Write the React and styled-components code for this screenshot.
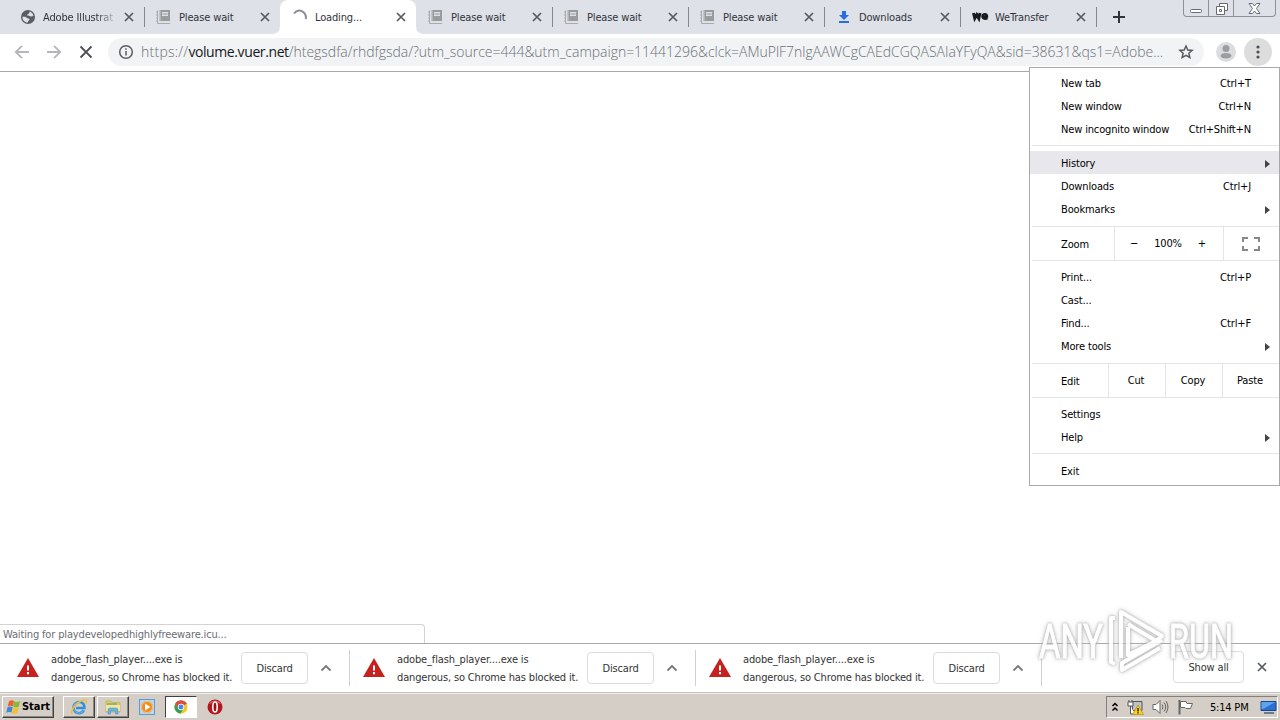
import React from 'react'
import styled, { createGlobalStyle } from 'styled-components'

const GlobalStyle = createGlobalStyle`
    * { box-sizing: border-box; }
    body { margin: 0; background: #fff; overflow: hidden; font: 11px/14px 'DejaVu Sans Condensed', 'DejaVu Sans', sans-serif; letter-spacing: -0.15px; }
    svg { display: block; flex-shrink: 0; }
`

const Screen = styled.div`
    position: relative;
    width: 1280px;
    height: 720px;
    display: flex;
    flex-direction: column;
    overflow: hidden;
    color: #333;
`

const TabStrip = styled.div`
    height: 34px;
    background: #dee1e8;
    display: flex;
    flex-shrink: 0;
    padding-left: 8px;
`

const Tab = styled.div`
    position: relative;
    width: 136px;
    height: 34px;
    padding: 0 10px 0 12px;
    display: flex;
    align-items: center;
    flex-shrink: 0;
    background: ${p => p.$active ? '#fff' : 'transparent'};
    border-radius: 8px 8px 0 0;
    color: #30343a;
`

const TabIcon = styled.span`
    width: 16px;
    height: 16px;
    display: flex;
    margin-right: 7px;
    flex-shrink: 0;
`

const TabTitle = styled.span`
    width: 78px;
    padding-top: 1px;
    white-space: nowrap;
    mask-image: ${p => p.$fade ? 'linear-gradient(90deg, #000 68%, transparent 97%)' : 'none'};
`

const TabClose = styled.span`
    display: flex;
    margin-left: auto;
`

const Divider = styled.i`
    width: 1px;
    height: 20px;
    background: #84878d;
    position: absolute;
    right: -1px;
    top: 7px;
`

const Curve = styled.svg`
    position: absolute;
    bottom: 0;
    left: ${p => p.$right ? 'auto' : '-8px'};
    right: ${p => p.$right ? '-8px' : 'auto'};
    transform: ${p => p.$right ? 'scaleX(-1)' : 'none'};
`

const NewTab = styled.span`
    display: flex;
    align-items: center;
    margin-left: 17px;
`

const WindowButtons = styled.div`
    display: flex;
    height: 17px;
    margin: 0 4px 0 auto;
    border: 1px solid #8e9199;
    border-top: 0;
    border-radius: 0 0 4px 4px;
`

const WindowButton = styled.span`
    width: ${p => p.$w}px;
    height: 16px;
    display: flex;
    align-items: center;
    justify-content: center;
    border-left: ${p => p.$line ? '1px solid #8e9199' : '0'};
`

const Toolbar = styled.div`
    height: 38px;
    border-bottom: 1px solid #a9a9a9;
    display: flex;
    align-items: center;
    padding: 0 8px 1px 14px;
    flex-shrink: 0;
`

const Nav = styled.div`
    display: flex;
    gap: 16px;
    width: 94px;
`

const Address = styled.div`
    width: 1096px;
    height: 28px;
    border-radius: 14px;
    background: #f1f3f4;
    display: flex;
    align-items: center;
    padding: 0 10px;
`

const Url = styled.span`
    width: 1037px;
    margin-left: 7px;
    color: #6b7076;
    font: 300 14px/20px 'Open Sans', 'Noto Sans', sans-serif;
    letter-spacing: -0.015px;
    white-space: nowrap;

    b { font-weight: 400; color: #16181b; letter-spacing: -0.4px; }
`

const Scheme = styled.span`
    letter-spacing: 0.25px;
`

const Round = styled.span`
    width: 28px;
    height: 28px;
    border-radius: 50%;
    background: ${p => p.$on ? '#dddddd' : 'transparent'};
    display: flex;
    align-items: center;
    justify-content: center;
    margin-left: ${p => p.$on ? 4 : 8}px;
`

const Page = styled.div`
    flex: 1;
    display: flex;
    align-items: flex-end;
`

const Status = styled.div`
    width: 425px;
    height: 19px;
    border: 1px solid #d3d3d3;
    border-left: 0;
    border-bottom: 0;
    border-radius: 0 4px 0 0;
    padding: 3px 0 0 3px;
    color: #6b6e73;
`

const Label = styled.span`
    white-space: nowrap;
`

const Menu = styled.div`
    position: absolute;
    left: 1029px;
    top: 67px;
    width: 251px;
    height: 419px;
    background: #fff;
    border: 1px solid #a9a9a9;
    padding-top: 3px;
    color: #000;
`

const MenuRow = styled.div`
    height: 23px;
    display: flex;
    align-items: center;
    justify-content: space-between;
    padding: 2px ${p => p.$sub ? 9 : 28}px 0 31px;
    background: ${p => p.$hover ? '#e8e8ec' : 'transparent'};
`

const MenuLine = styled.div`
    height: 1px;
    margin: ${p => p.$top ?? 5}px 0 ${p => p.$bottom ?? 5}px 2px;
    background: #e4e5e7;
`

const SplitRow = styled.div`
    height: 33px;
    display: flex;
    align-items: center;
    padding-left: 31px;
`

const Cell = styled.span`
    width: ${p => p.$w}px;
    height: 33px;
    border-left: ${p => p.$first ? '0' : '1px solid #e4e5e7'};
    display: flex;
    align-items: center;
    justify-content: ${p => p.$first ? 'flex-start' : 'center'};
    gap: 16px;
    padding: ${p => p.$first ? '2px 0 0' : '0 2px 0 0'};
`

const Shelf = styled.div`
    height: 50px;
    border-top: 1px solid #a9a9a9;
    border-bottom: 1px solid #c4c1bd;
    display: flex;
    flex-shrink: 0;
    background: #fff;
`

const Download = styled.div`
    width: 346px;
    height: 48px;
    display: flex;
    align-items: center;
    padding-left: 16px;
    position: relative;
`

const DownloadLine = styled.i`
    position: absolute;
    right: -4px;
    top: 6px;
    width: 1px;
    height: 36px;
    background: #cfd0d2;
`

const Message = styled.div`
    width: 201px;
    padding: 1px 0 0 11px;
    line-height: 18px;
    display: flex;
    flex-direction: column;
`

const Button = styled.span`
    width: ${p => p.$w}px;
    height: 32px;
    border: 1px solid #dadce0;
    border-radius: 4px;
    display: flex;
    align-items: center;
    justify-content: center;
    padding-top: 1px;
`

const Arrow = styled.span`
    display: flex;
    margin-left: 12px;
`

const ShelfEnd = styled.div`
    display: flex;
    align-items: center;
    margin-left: auto;
    gap: 13px;
    padding: 0 13px 2px 0;
`

const Taskbar = styled.div`
    height: 27px;
    background: #d5cec6;
    border-top: 1px solid #f2efec;
    display: flex;
    padding: 2px 0 0 2px;
    flex-shrink: 0;
`

const TaskButton = styled.span`
    width: ${p => p.$w}px;
    height: 22px;
    display: flex;
    align-items: center;
    justify-content: center;
    margin-left: ${p => p.$ml || 0}px;
    background: ${p => p.$pressed ? '#fff' : 'transparent'};
    border: ${p => p.$flat ? '0' : '1px solid'};
    border-color: ${p => p.$pressed ? '#404040 #fff #fff #404040' : '#fff #404040 #404040 #fff'};
    box-shadow: ${p => p.$flat || p.$pressed ? 'none' : 'inset -1px -1px #8c8780'};
    color: #000;
    font-weight: bold;
    letter-spacing: 0;
`

const Tray = styled.div`
    width: 172px;
    height: 22px;
    margin: 0 2px 0 auto;
    border: 1px solid;
    border-color: #808080 #fff #fff #808080;
    display: flex;
    align-items: center;
    gap: 8px;
    color: #000;
    padding-left: 4px;
`

const Clock = styled.span`
    width: 42px;
    margin: 0 0 0 8px;
    padding-top: 1px;
    white-space: nowrap;
    letter-spacing: -0.2px;
`

const Watermark = styled.svg`
    position: absolute;
    left: 1030px;
    top: 600px;
    filter: drop-shadow(0 0 1px #aaa) drop-shadow(0 0 2px #bbb);
    opacity: 0.85;
    pointer-events: none;
`

const Cross = ({ size = 10, color = '#555a60', w = 1.7 }) => (
    <svg width={size} height={size} viewBox="0 0 10 10" stroke={color} strokeWidth={w}><path d="M1 1l8 8M9 1L1 9" /></svg>
)

const Globe = () => (
    <svg width="16" height="16" viewBox="0 0 16 16">
        <circle cx="8" cy="8" r="7" fill="#5a5d62" />
        <path d="M2.500 7.500c2 .3 3.500.2 4.300 1.300.8 1 2.700.2 2.800 1.700-.8 1-1.600 1.500-1.800 3C4.500 13.500 2.200 11 2.500 7.500zM9.500 2.600c2 .6 3.300 1.900 3.900 3.900-1 .9-1.800 1.300-2.900.8C9.300 6.800 8.600 6.600 7.300 6.500c-.6-.9.500-1.300 1.400-1.700.9-.4.8-1.200.8-2.200z" fill="#dee1e8" />
    </svg>
)

const Book = () => (
    <svg width="16" height="16" viewBox="0 0 16 16" fill="none">
        <path d="M3.500 1H14v11H3.500z" fill="#999b9f" />
        <path d="M0 3h2M0 6h2M0 9h2M0 12h2M1.500 1.500v13H14" stroke="#a7a9ae" />
        <path d="M6 3h6v4H6z" fill="#dcdee4" />
        <path d="M4 1.500v11" stroke="#c8cacf" />
        <path d="M6.500 5h5" stroke="#999b9f" />
    </svg>
)

const Spinner = () => (
    <svg width="16" height="16" viewBox="0 0 16 16" fill="none" stroke="#8a8c91" strokeWidth="2"><path d="M2 4.500C5 .5 9 1 11.500 3.200 13.500 5 14.300 7.500 13.800 10" /></svg>
)

const DownloadIcon = () => (
    <svg width="16" height="16" viewBox="0 0 16 16" fill="#2a6de0"><path d="M6 2h4v4h3l-5 5-5-5h3zM3 12h10v2H3z" /></svg>
)

const WeIcon = () => (
    <svg width="17" height="16" viewBox="0 0 17 16" fill="none" stroke="#17191c" strokeWidth="3">
        <path d="M1.500 4l1.300 5.300 2-3.500 2 3.500L8 4" />
        <path d="M10.500 7.600h4.500c0-3.200-4.500-3.200-4.500-.3 0 2.800 3 2.800 5 1.800" strokeWidth="2.400" />
    </svg>
)

const Back = ({ flip }) => (
    <svg width="16" height="16" viewBox="0 0 16 16" fill="none" stroke="#b4b6b9" strokeWidth="1.800">
        <path d={flip ? 'M1 8h13M8 1.800L14.200 8 8 14.200' : 'M15 8H2M8 1.800L1.800 8 8 14.200'} />
    </svg>
)

const Info = () => (
    <svg width="16" height="16" viewBox="0 0 16 16" fill="none" stroke="#5a5e63" strokeWidth="1.500">
        <circle cx="8" cy="8" r="6.300" /><path d="M8 7v4.500M8 4.200v1.500" />
    </svg>
)

const Star = () => (
    <svg width="16" height="16" viewBox="0 0 24 24" fill="none" stroke="#55595e" strokeWidth="2.200">
        <path d="M12 3l2.700 6 6.500.6-4.900 4.300 1.500 6.400L12 16.900l-5.800 3.400 1.500-6.400-4.900-4.300 6.500-.6z" />
    </svg>
)

const Avatar = () => (
    <svg width="20" height="20" viewBox="0 0 20 20" fill="#9b9da1">
        <circle cx="10" cy="10" r="10" fill="#dcdde0" /><circle cx="10" cy="6.500" r="3.500" /><ellipse cx="10" cy="13.800" rx="5.500" ry="2.800" />
    </svg>
)

const Dots = () => (
    <svg width="4" height="14" viewBox="0 0 4 14" fill="#4d5156"><circle cx="2" cy="2" r="1.600" /><circle cx="2" cy="7" r="1.600" /><circle cx="2" cy="12" r="1.600" /></svg>
)

const Warning = () => (
    <svg width="24" height="24" viewBox="0 0 24 24"><path d="M1 21L12 2l11 19z" fill="#c5221f" /><path d="M12 9.500v5M12 16v2.200" stroke="#fff" strokeWidth="2" /></svg>
)

const SubArrow = () => <svg width="5" height="8"><path d="M0 0l5 4-5 4z" fill="#444" /></svg>

const WindowsFlag = () => (
    <svg width="16" height="16" viewBox="0 0 16 16">
        <path d="M3 2.500q2.500-2 5-.5L7 7.300Q4.500 6 1.700 7.500z" fill="#e8622a" />
        <path d="M8.300 2.300q2.500 1.300 6-.3l-1.500 5.700q-2.500 1.300-5.500 0z" fill="#86b83b" />
        <path d="M1.500 8.300q2.500-1.500 5.200-.2L5.500 13.600q-2.500-1.300-5.200.2z" fill="#3c8ad6" />
        <path d="M7.200 8.500q2.700 1.200 5.500-.2l-1.400 5.700q-2.600 1.500-5.400.2z" fill="#f6c02d" />
    </svg>
)

const Explorer = () => (
    <svg width="18" height="18" viewBox="0 0 18 18" fill="none">
        <path d="M13.800 12.200c-1 2-2.700 3-4.700 3-3.300 0-5.600-2.400-5.600-5.600S5.900 4 9.200 4s5.400 2.500 5.200 6H6" stroke="#2f8fdc" strokeWidth="2.600" />
        <path d="M13.800 12.200c-1 2-2.700 3-4.700 3-3.300 0-5.600-2.400-5.600-5.600S5.900 4 9.200 4" stroke="#7cc4f3" strokeWidth="0.800" />
        <path d="M2 16c-2-3 3-10 9-13 3-1.600 5-1.700 5.500-.3.300.8 0 2-.6 3" stroke="#f0bd34" strokeWidth="1.400" />
    </svg>
)

const Folder = () => (
    <svg width="18" height="18" viewBox="0 0 18 18">
        <path d="M2 3h5l1 1.500h8V14H2z" fill="#e9c667" stroke="#c9a13e" strokeWidth="0.600" />
        <path d="M3 5h10v2H3z" fill="#7fc071" /><path d="M2 7h14v6H2z" fill="#f8e6a0" />
        <path d="M4 16v-4q0-2 2-2h6q2 0 2 2v4h-2.500v-3h-5v3z" fill="#68b5e3" stroke="#3f8cc4" strokeWidth="0.500" />
    </svg>
)

const MediaPlayer = () => (
    <svg width="16" height="16" viewBox="0 0 16 16">
        <rect x="0.500" y="0.500" width="15" height="15" fill="#b4d7f2" stroke="#5d9bd0" />
        <circle cx="8" cy="8" r="6" fill="#f28a1c" /><circle cx="8" cy="8" r="5.500" fill="none" stroke="#fbc577" />
        <path d="M6 4.500L11.500 8 6 11.500z" fill="#fff" />
    </svg>
)

const Chrome = () => (
    <svg width="14" height="14" viewBox="0 0 16 16">
        <circle cx="8" cy="8" r="7.500" fill="#f6c927" />
        <path d="M8 8L1.500 4.250A7.500 7.500 0 0114.500 4.250z" fill="#dd4b3c" />
        <path d="M8 4.500h6.600a7.500 7.500 0 00-13.100-.3L5 10z" fill="#dd4b3c" />
        <path d="M1.500 4.250a7.500 7.500 0 006 11.250L11 10l-6 0z" fill="#2ea05a" />
        <circle cx="8" cy="8" r="3.600" fill="#fff" /><circle cx="8" cy="8" r="2.800" fill="#4585ee" />
    </svg>
)

const Opera = () => (
    <svg width="16" height="16" viewBox="0 0 16 16">
        <circle cx="8" cy="8" r="7.500" fill="#b5161c" /><path d="M2 5a7 7 0 0112 0q-6-2-12 0z" fill="#d9575a" />
        <ellipse cx="8" cy="8" rx="2.200" ry="5" fill="#991015" stroke="#fff" strokeWidth="1.600" />
    </svg>
)

const TrayIcons = () => (
    <>
        <svg width="8" height="10" viewBox="0 0 8 10" fill="none" stroke="#000" strokeWidth="1.500"><path d="M1.500 4L4 1.500 6.500 4M1.500 8.500L4 6l2.500 2.500" /></svg>
        <svg width="17" height="16" viewBox="0 0 17 16" fill="none">
            <path d="M5.500 2.500H15v9H5.500z" fill="#bfc2c4" stroke="#555" />
            <path d="M1 3h5v4H1zM2 1v2M5 1v2M3.500 7v8H8" fill="#fff" stroke="#555" />
            <path d="M11 6l5.500 9.500h-11z" fill="#fbd21e" stroke="#a98400" strokeWidth="0.600" /><path d="M11 9v3.500M11 13.300v1.200" stroke="#000" strokeWidth="1.200" />
        </svg>
        <svg width="17" height="16" viewBox="0 0 17 16" fill="none" stroke="#666">
            <path d="M1 5.500h3l4-4v13l-4-4H1z" fill="#fff" /><path d="M10 5.500q2 2.500 0 5M12 3.500q3.500 4.500 0 9M14 2q4 6 0 12" />
        </svg>
        <svg width="17" height="16" viewBox="0 0 17 16" stroke="#666">
            <path d="M2.500 1v14.500" strokeWidth="2" /><path d="M3.500 2.500H9l1 2h5.500l-2 5H9l-1-1H3.500z" fill="#fff" />
        </svg>
    </>
)

const Desktop = () => (
    <svg width="17" height="16" viewBox="0 0 17 16">
        <path d="M1 2.500h15v9H1z" fill="#2b6fd0" stroke="#16488f" /><path d="M1.500 3h14L3 10H1.500z" fill="#5fa2ee" />
        <path d="M4 14h10" stroke="#4a5f7c" strokeWidth="1.500" />
    </svg>
)

const tabs = [
    { title: 'Adobe Illustrat', icon: <Globe />, fade: true },
    { title: 'Please wait', icon: <Book /> },
    { title: 'Loading...', icon: <Spinner />, active: true },
    { title: 'Please wait', icon: <Book /> },
    { title: 'Please wait', icon: <Book /> },
    { title: 'Please wait', icon: <Book /> },
    { title: 'Downloads', icon: <DownloadIcon /> },
    { title: 'WeTransfer', icon: <WeIcon /> },
]

function Row({ text, keys, sub, hover }) {
    return (
        <MenuRow $sub={sub} $hover={hover}>
            <Label>{text}</Label>
            {sub ? <SubArrow /> : <Label>{keys}</Label>}
        </MenuRow>
    )
}

function AppMenu() {
    return (
        <Menu>
            <Row text="New tab" keys="Ctrl+T" />
            <Row text="New window" keys="Ctrl+N" />
            <Row text="New incognito window" keys="Ctrl+Shift+N" />
            <MenuLine />
            <Row text="History" sub hover />
            <Row text="Downloads" keys="Ctrl+J" />
            <Row text="Bookmarks" sub />
            <MenuLine $top={6} $bottom={0} />
            <SplitRow>
                <Cell $w={53} $first>Zoom</Cell>
                <Cell $w={109}><span>−</span><span>100%</span><span>+</span></Cell>
                <Cell $w={56}>
                    <svg width="18" height="14" fill="none" stroke="#888" strokeWidth="2"><path d="M1 5V1h5M12 1h5v4M17 9v4h-5M6 13H1V9" /></svg>
                </Cell>
            </SplitRow>
            <MenuLine $top={0} $bottom={4} />
            <Row text="Print..." keys="Ctrl+P" />
            <Row text="Cast..." />
            <Row text="Find..." keys="Ctrl+F" />
            <Row text="More tools" sub />
            <MenuLine $top={6} $bottom={0} />
            <SplitRow>
                <Cell $w={47} $first>Edit</Cell>
                <Cell $w={57}>Cut</Cell>
                <Cell $w={57}>Copy</Cell>
                <Cell $w={57}>Paste</Cell>
            </SplitRow>
            <MenuLine $top={0} $bottom={4} />
            <Row text="Settings" />
            <Row text="Help" sub />
            <MenuLine />
            <Row text="Exit" />
        </Menu>
    )
}

export default function App() {
    return (
        <Screen>
            <GlobalStyle />
            <TabStrip>
                {tabs.map((t, i) => (
                    <Tab key={i} $active={t.active}>
                        {t.active && <Curve width="8" height="8" fill="#fff"><path d="M8 0v8H0q8 0 8-8z" /></Curve>}
                        {t.active && <Curve $right width="8" height="8" fill="#fff"><path d="M8 0v8H0q8 0 8-8z" /></Curve>}
                        <TabIcon>{t.icon}</TabIcon>
                        <TabTitle $fade={t.fade}>{t.title}</TabTitle>
                        <TabClose><Cross /></TabClose>
                        {!t.active && i !== 1 && <Divider />}
                    </Tab>
                ))}
                <NewTab><svg width="12" height="12" stroke="#303338" strokeWidth="2"><path d="M6 0v12M0 6h12" /></svg></NewTab>
                <WindowButtons>
                    <WindowButton $w={24}>
                        <svg width="12" height="16" fill="#fff" stroke="#666a72"><rect x="0.500" y="9.500" width="11" height="3" rx="1" /></svg>
                    </WindowButton>
                    <WindowButton $w={25} $line>
                        <svg width="13" height="13" fill="#fff" stroke="#666a72"><path d="M4.500 1.500h8v7h-8z" /><path d="M1.500 4.500h8v8h-8zM4.500 7.500h2v2h-2z" /></svg>
                    </WindowButton>
                    <WindowButton $w={42} $line>
                        <svg width="13" height="11" fill="#fff" stroke="#666a72"><path d="M1 .5h3.500l2 2.500 2-2.500H12L8.500 5.500l3.500 5H8.500l-2-2.500-2 2.500H1l3.500-5z" /></svg>
                    </WindowButton>
                </WindowButtons>
            </TabStrip>
            <Toolbar>
                <Nav>
                    <Back />
                    <Back flip />
                    <svg width="16" height="16" stroke="#4c5055" strokeWidth="1.800"><path d="M2.500 2.500l11 11M13.500 2.500l-11 11" /></svg>
                </Nav>
                <Address>
                    <Info />
                    <Url><Scheme>https://</Scheme><b>volume.vuer.net</b>/htegsdfa/rhdfgsda/?utm_source=444&amp;utm_campaign=11441296&amp;clck=AMuPlF7nlgAAWCgCAEdCGQASAIaYFyQA&amp;sid=38631&amp;qs1=Adobe...</Url>
                    <Star />
                </Address>
                <Round><Avatar /></Round>
                <Round $on><Dots /></Round>
            </Toolbar>
            <Page>
                <Status><Label>Waiting for playdevelopedhighlyfreeware.icu...</Label></Status>
            </Page>
            <Shelf>
                {[0, 1, 2].map(n => (
                    <Download key={n}>
                        <Warning />
                        <Message>
                            <Label>adobe_flash_player....exe is</Label>
                            <Label>dangerous, so Chrome has blocked it.</Label>
                        </Message>
                        <Button $w={67}>Discard</Button>
                        <Arrow><svg width="12" height="8" fill="none" stroke="#77797d" strokeWidth="1.800"><path d="M1.500 6.500L6 2l4.500 4.500" /></svg></Arrow>
                        <DownloadLine />
                    </Download>
                ))}
                <ShelfEnd>
                    <Button $w={71}>Show all</Button>
                    <Cross />
                </ShelfEnd>
            </Shelf>
            <Taskbar>
                <TaskButton $w={52}><WindowsFlag />Start</TaskButton>
                <TaskButton $w={32} $ml={9}><Explorer /></TaskButton>
                <TaskButton $w={32} $ml={2}><Folder /></TaskButton>
                <TaskButton $w={32} $ml={2} $flat><MediaPlayer /></TaskButton>
                <TaskButton $w={32} $ml={2} $pressed><Chrome /></TaskButton>
                <TaskButton $w={32} $ml={2} $flat><Opera /></TaskButton>
                <Tray>
                    <TrayIcons />
                    <Clock>5:14 PM</Clock>
                    <Desktop />
                </Tray>
            </Taskbar>
            <Watermark width="215" height="90" viewBox="0 0 215 90" fill="#fff" fontFamily="Roboto" fontSize="49" letterSpacing="0">
                <text x="9" y="58" textLength="64" lengthAdjust="spacingAndGlyphs" stroke="#fff">ANY</text>
                <text x="139" y="58" textLength="64" lengthAdjust="spacingAndGlyphs" stroke="#fff">RUN</text>
                <g fill="none" stroke="#fff" strokeWidth="4" strokeLinejoin="round">
                    <path d="M91 58V12l41 24-6 5-28-17" />
                    <path d="M85 18h-4v44l4 2M98 27v28l28-14M132 40L92 63v7l38-22" />
                </g>
            </Watermark>
            <AppMenu />
        </Screen>
    )
}
